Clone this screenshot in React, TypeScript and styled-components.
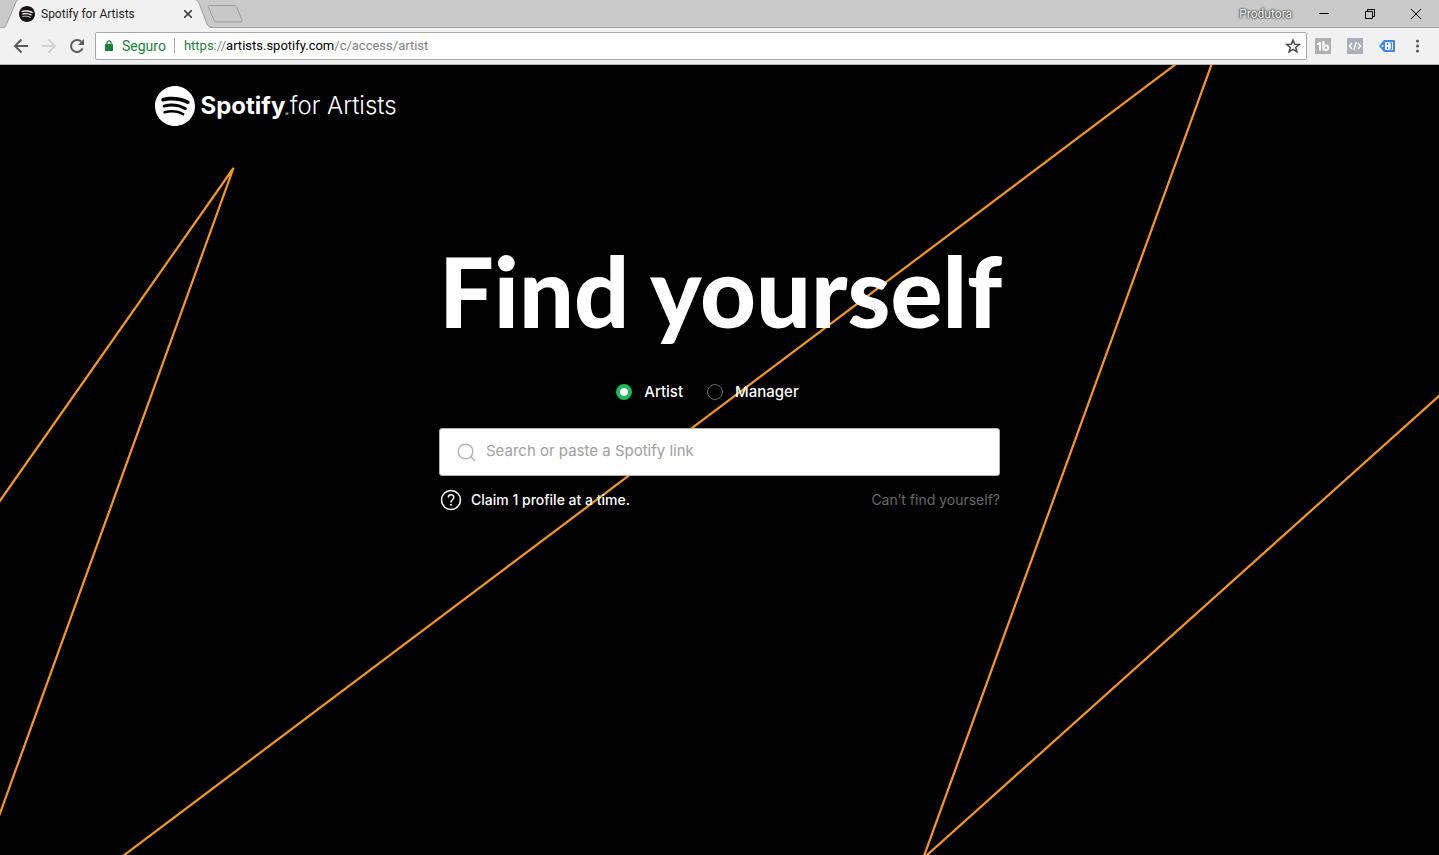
import React, { useState } from "react";
import styled, { createGlobalStyle } from "styled-components";

const GlobalStyle = createGlobalStyle`
  *, *::before, *::after { box-sizing: border-box; }
  html, body { margin: 0; height: 100%; background: #000; }
  #root { height: 100%; }
  button, input { font: inherit; }
`;

const chromeFont = `Roboto, "Noto Sans", sans-serif`;
const pageFont = `Inter, "Liberation Sans", sans-serif`;

const Window = styled.div`
  display: flex;
  flex-direction: column;
  min-height: 100%;
  font-family: ${pageFont};
`;

const TabStrip = styled.div`
  display: flex;
  height: 28px;
  padding-left: 4px;
  background: #cacaca;
  box-shadow: inset 0 -1px #a3a3a3;
  font-family: ${chromeFont};
`;

const Tab = styled.div`
  position: relative;
  display: flex;
  align-items: center;
  width: 208px;
  padding: 0 20px 0 15px;
`;

const TabShape = styled.svg`
  position: absolute;
  inset: 0;
`;

const TabTitle = styled.span`
  position: relative;
  flex: 1;
  margin-left: 6px;
  font-size: 12px;
  line-height: 16px;
  color: #222;
  white-space: nowrap;
`;

const PlainButton = styled.button`
  position: relative;
  display: flex;
  align-items: center;
  justify-content: center;
  flex: none;
  padding: 0;
  border: 0;
  background: none;
  color: inherit;
`;

const TabIcon = styled.svg`
  position: relative;
  flex: none;
`;

const NewTabButton = styled(PlainButton)`
  align-self: center;
  margin-left: -5px;
`;

const WindowControls = styled.div`
  display: flex;
  align-items: center;
  margin-left: auto;
`;

const ProfileButton = styled(PlainButton)`
  margin-right: 9px;
  font-size: 12px;
  line-height: 16px;
  color: #fff;
  text-shadow: 0 0 2px #333, 0 0 2px #333, 0 0 1px #333;
`;

const ControlButton = styled(PlainButton)`
  width: 46px;
  height: 25px;
`;

const Toolbar = styled.div`
  display: flex;
  align-items: center;
  height: 37px;
  padding: 0 7px;
  background: #f1f1f1;
  border-bottom: 1px solid #b6b6b6;
  font-family: ${chromeFont};
`;

const NavButton = styled(PlainButton)`
  width: 28px;
  height: 28px;
`;

const AddressBar = styled.div`
  display: flex;
  flex: 1;
  align-items: center;
  height: 28px;
  margin-left: 4px;
  padding: 0 5px 0 9px;
  background: #fff;
  border: 1px solid #a9a9a9;
  border-radius: 2px;
  line-height: 18px;
`;

const Security = styled.span`
  margin-left: 9px;
  padding-right: 8px;
  border-right: 1px solid #a9a9a9;
  color: #188038;
  font-size: 14px;
  line-height: 16px;
`;

const Url = styled.div`
  flex: 1;
  margin-left: 9px;
  color: #808080;
  font-size: 13px;
  white-space: nowrap;
`;

const UrlPart = styled.span<{ $color: string }>`
  color: ${(p) => p.$color};
`;

const Extensions = styled.div`
  display: flex;
  align-items: center;
  gap: 16px;
  margin-left: 8px;
  padding-right: 5px;
`;

const Page = styled.main`
  position: relative;
  flex: 1;
  background: #000;
  color: #fff;
  overflow: hidden;
`;

const Backdrop = styled.svg`
  position: absolute;
  inset: 0;
  width: 100%;
  height: 100%;
`;

const Header = styled.header`
  position: relative;
  max-width: 1130px;
  margin: 0 auto;
  padding-top: 21px;
`;

const Brand = styled.a`
  display: inline-flex;
  align-items: center;
  height: 40px;
  color: #fff;
  text-decoration: none;
  font-size: 24px;
  line-height: 40px;
  white-space: nowrap;
`;

const BrandName = styled.strong`
  margin-left: 6px;
  font-weight: 700;
`;

const Registered = styled.span`
  align-self: flex-end;
  font-size: 5px;
  line-height: 24px;
`;

const BrandSuffix = styled.span`
  margin-left: 1px;
  font-weight: 300;
`;

const ClaimForm = styled.form`
  position: relative;
  max-width: 561px;
  margin: 0 auto;
  padding-top: 105px;
`;

const Title = styled.h1`
  margin: 0;
  font-family: Lato, ${pageFont};
  font-size: 97px;
  line-height: 112px;
  font-weight: 900;
  text-align: center;
  white-space: nowrap;
`;

const Roles = styled.div`
  display: flex;
  justify-content: center;
  gap: 24px;
  margin-top: 33px;
  padding-right: 24px;
`;

const RoleLabel = styled.label`
  display: flex;
  align-items: center;
  gap: 12px;
  font-size: 15px;
  line-height: 24px;
  font-weight: 500;
`;

const Radio = styled.input`
  appearance: none;
  width: 16px;
  height: 16px;
  margin: 0;
  border: 1px solid #6a6a6a;
  border-radius: 50%;

  &:checked {
    border: 4px solid #1db954;
    background: #fff;
  }
`;

const SearchBox = styled.label`
  display: flex;
  align-items: center;
  gap: 10px;
  height: 48px;
  margin-top: 24px;
  padding: 0 17px;
  background: #fff;
  border: 1px solid #b3b3b3;
  border-radius: 3px;
`;

const SearchInput = styled.input`
  flex: 1;
  min-width: 0;
  padding: 0 0 2px;
  border: 0;
  outline: 0;
  background: none;
  font-size: 15px;
  line-height: 24px;
  color: #000;

  &::placeholder {
    color: #a0a0a0;
    opacity: 1;
  }
`;

const HelpRow = styled.div`
  display: flex;
  align-items: center;
  justify-content: space-between;
  margin-top: 12px;
  line-height: 24px;
`;

const Hint = styled.span`
  display: flex;
  align-items: center;
  gap: 9px;
  padding-left: 1px;
  font-size: 14px;
  font-weight: 500;
`;

const HelpLink = styled.a`
  color: #6a6a6a;
  font-size: 14px;
  text-decoration: none;
`;

const SpotifyMark = ({ size, color }: { size: number; color: string }) => (
  <TabIcon width={size} height={size} viewBox="0 0 24 24" fill={color} aria-hidden="true">
    <path d="M12 0C5.4 0 0 5.4 0 12s5.4 12 12 12 12-5.4 12-12S18.66 0 12 0zm5.521 17.34c-.24.359-.66.48-1.021.24-2.82-1.74-6.36-2.101-10.561-1.141-.418.122-.779-.179-.899-.539-.12-.421.18-.78.54-.9 4.56-1.021 8.52-.6 11.64 1.32.42.18.479.659.301 1.02zm1.44-3.3c-.301.42-.841.6-1.262.3-3.239-1.98-8.159-2.58-11.939-1.38-.479.12-1.02-.12-1.14-.6-.12-.48.12-1.021.6-1.141C9.6 9.9 15 10.561 18.72 12.84c.361.181.54.78.241 1.2zm.12-3.36C15.24 8.4 8.82 8.16 5.16 9.301c-.6.179-1.2-.181-1.38-.721-.18-.601.18-1.2.72-1.381 4.26-1.26 11.28-1.02 15.721 1.621.539.3.719 1.02.419 1.56-.299.421-1.02.599-1.559.3z" />
  </TabIcon>
);

const BrowserTabs = () => (
  <TabStrip>
    <Tab>
      <TabShape width="208" height="28" viewBox="0 0 208 28" fill="none">
        <path d="M0 28C2 27 2 25 3 23L12 2C13 0 13 0 15 0H191C193 0 194 1 195 3L203 24C204 26 205 28 208 28Z" fill="#f1f1f1" />
        <path d="M0 27.500C2 27 2 25 3 23L12 2C13 0 13 0 15 -0.500M191 -0.500C193 0 194 1 195 3L203 24C204 26 205 27.500 208 27.500" stroke="#9b9b9b" />
      </TabShape>
      <SpotifyMark size={16} color="#191414" />
      <TabTitle>Spotify for Artists</TabTitle>
      <PlainButton type="button" aria-label="Close tab">
        <svg width="8" height="8" viewBox="0 0 8 8" stroke="#454545" strokeWidth="1.600">
          <path d="M0 0L8 8M8 0L0 8" />
        </svg>
      </PlainButton>
    </Tab>
    <NewTabButton type="button" aria-label="New tab">
      <svg width="36" height="18" viewBox="0 0 36 18" fill="#c8c8c8" stroke="#9c9c9c">
        <path d="M3 .5H27C28.500 .5 29.300 1 29.800 2.300L34.800 14.500C35.400 16 35 17 33.500 17H10C8.500 17 7.500 16.500 7 15L1.500 2.500C1 1.200 1.500 .5 3 .5Z" />
      </svg>
    </NewTabButton>
    <WindowControls>
      <ProfileButton type="button">Produtora</ProfileButton>
      <ControlButton type="button" aria-label="Minimize">
        <svg width="10" height="10" viewBox="0 0 10 10" stroke="#000"><path d="M0 4.500H10" /></svg>
      </ControlButton>
      <ControlButton type="button" aria-label="Restore">
        <svg width="10" height="10" viewBox="0 0 10 10" fill="none" stroke="#000">
          <path d="M.5 2.500H7.500V9.500H.5ZM2.500 2.500V.5H9.500V7.500H7.500" />
        </svg>
      </ControlButton>
      <ControlButton type="button" aria-label="Close">
        <svg width="10" height="10" viewBox="0 0 10 10" stroke="#000"><path d="M0 0L10 10M10 0L0 10" /></svg>
      </ControlButton>
    </WindowControls>
  </TabStrip>
);

const BrowserToolbar = () => (
  <Toolbar>
    <NavButton type="button" aria-label="Back">
      <svg width="16" height="16" viewBox="0 0 16 16" fill="none" stroke="#5a5a5f" strokeWidth="2">
        <path d="M15 8H2.500M8.500 1.500L2 8L8.500 14.500" />
      </svg>
    </NavButton>
    <NavButton type="button" aria-label="Forward" disabled>
      <svg width="16" height="16" viewBox="0 0 16 16" fill="none" stroke="#d2d2d2" strokeWidth="2">
        <path d="M1 8H13.500M7.500 1.500L14 8L7.500 14.500" />
      </svg>
    </NavButton>
    <NavButton type="button" aria-label="Reload">
      <svg width="16" height="16" viewBox="0 0 16 16" fill="none">
        <path d="M13.500 10.500A6 6 0 1 1 12.300 3.800" stroke="#5a5a5f" strokeWidth="2" />
        <path d="M15 1V7H9Z" fill="#5a5a5f" />
      </svg>
    </NavButton>
    <AddressBar>
      <svg width="8" height="12" viewBox="0 0 8 12" aria-hidden="true">
        <path d="M2 5V2.800A2 2 0 0 1 6 2.800V5" fill="none" stroke="#188038" strokeWidth="1.300" />
        <rect y="4" width="8" height="7" rx="0.600" fill="#188038" />
      </svg>
      <Security>Seguro</Security>
      <Url role="textbox" aria-label="Address">
        <UrlPart $color="#188038">https</UrlPart>://<UrlPart $color="#000">artists.spotify.com</UrlPart>/c/access/artist
      </Url>
      <PlainButton type="button" aria-label="Bookmark this page">
        <svg width="16" height="16" viewBox="0 0 16 16" fill="none" stroke="#4a4a4a" strokeWidth="1.500">
          <path d="M8 2L9.700 6.200L14.200 6.500L10.700 9.400L11.900 13.800L8 11.400L4.100 13.800L5.300 9.400L1.800 6.500L6.300 6.200Z" />
        </svg>
      </PlainButton>
    </AddressBar>
    <Extensions>
      <PlainButton type="button" aria-label="Video tools extension">
        <svg width="16" height="16" viewBox="0 0 16 16" fill="none" stroke="#fff" strokeWidth="2">
          <rect width="16" height="16" fill="#b0b0b0" stroke="none" />
          <path d="M2 6H6M5 4V12.500M8.500 3V12.500" />
          <circle cx="11" cy="9.800" r="2.200" />
        </svg>
      </PlainButton>
      <PlainButton type="button" aria-label="Code extension">
        <svg width="16" height="16" viewBox="0 0 16 16" fill="none" stroke="#fff" strokeWidth="1.400">
          <rect width="16" height="16" fill="#aab0bb" stroke="none" />
          <path d="M5 5L2.500 8L5 11M11 5L13.500 8L11 11M9.200 4L6.800 12" />
        </svg>
      </PlainButton>
      <PlainButton type="button" aria-label="Tag extension">
        <svg width="16" height="12" viewBox="0 0 16 12" fill="none">
          <path d="M5 0H15Q16 0 16 1V11Q16 12 15 12H5L0 6Z" fill="#3b86f7" />
          <rect x="6" y="2" width="8" height="8" fill="#fff" />
          <circle cx="3.500" cy="6" r="1" fill="#fff" />
          <path d="M8.500 3V5M8.500 7V9M10.500 3H12.500V9H10.500" stroke="#3b86f7" strokeWidth="1.200" />
        </svg>
      </PlainButton>
      <PlainButton type="button" aria-label="Menu">
        <svg width="16" height="16" viewBox="0 0 16 16" fill="#5a5a5f">
          <circle cx="6.500" cy="3" r="1.600" />
          <circle cx="6.500" cy="8" r="1.600" />
          <circle cx="6.500" cy="13" r="1.600" />
        </svg>
      </PlainButton>
    </Extensions>
  </Toolbar>
);

export default function App() {
  const [role, setRole] = useState("Artist");
  const [query, setQuery] = useState("");

  return (
    <>
      <GlobalStyle />
      <Window>
        <BrowserTabs />
        <BrowserToolbar />
        <Page>
          <Backdrop viewBox="0 0 1439 790" preserveAspectRatio="xMidYMid slice" fill="none" stroke="#f7981f" strokeWidth="2.200" aria-hidden="true">
            <path d="M-10 450L233.500 103L-10 776" />
            <path d="M1188 -10L111 800" />
            <path d="M1215 -10L924 791M926 791L1449 322" />
          </Backdrop>
          <Header>
            <Brand href="#" aria-label="Spotify for Artists">
              <SpotifyMark size={40} color="#fff" />
              <BrandName>Spotify</BrandName>
              <Registered>®</Registered>
              <BrandSuffix>for Artists</BrandSuffix>
            </Brand>
          </Header>
          <ClaimForm onSubmit={(e) => e.preventDefault()}>
            <Title>Find yourself</Title>
            <Roles role="radiogroup" aria-label="Role">
              {["Artist", "Manager"].map((name) => (
                <RoleLabel key={name}>
                  <Radio type="radio" name="role" checked={role === name} onChange={() => setRole(name)} />
                  {name}
                </RoleLabel>
              ))}
            </Roles>
            <SearchBox>
              <svg width="19" height="19" viewBox="0 0 19 19" fill="none" stroke="#b3b3b3" strokeWidth="1.400" aria-hidden="true">
                <circle cx="8.500" cy="8.500" r="7.300" />
                <path d="M13.500 13.500L18 18" />
              </svg>
              <SearchInput
                type="text"
                aria-label="Search or paste a Spotify link"
                placeholder="Search or paste a Spotify link"
                value={query}
                onChange={(e) => setQuery(e.target.value)}
              />
            </SearchBox>
            <HelpRow>
              <Hint>
                <svg width="22" height="22" viewBox="0 0 22 22" fill="none" stroke="#fff" strokeWidth="1.500" aria-hidden="true">
                  <circle cx="11" cy="11" r="9.500" />
                  <path d="M8.300 8.500C8.300 4.800 13.800 4.800 13.800 8.200C13.800 10.500 11 10.500 11 13.500" />
                  <circle cx="11" cy="15.800" r="1" fill="#fff" stroke="none" />
                </svg>
                Claim 1 profile at a time.
              </Hint>
              <HelpLink href="#">Can’t find yourself?</HelpLink>
            </HelpRow>
          </ClaimForm>
        </Page>
      </Window>
    </>
  );
}
